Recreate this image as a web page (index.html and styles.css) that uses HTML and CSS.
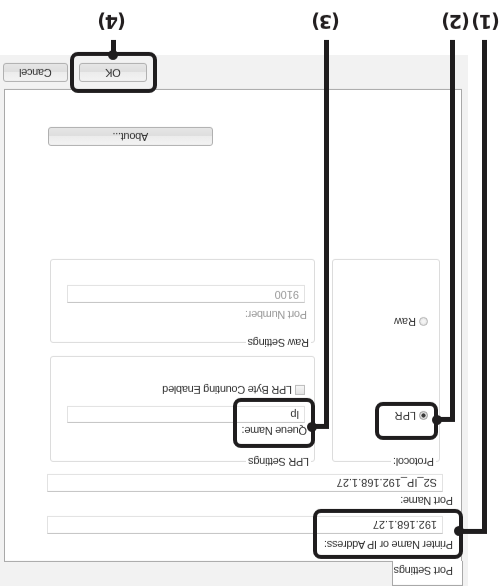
FILE: index.html
```html
<!DOCTYPE html>
<html lang="en">

<head>
    <meta charset="UTF-8">
    <title>Port Settings</title>
    <link rel="stylesheet" href="styles.css">
</head>

<body>
    <!-- the whole sheet is shown upside down -->
    <div class="page">
        <div class="dialog">
            <div class="tabs">
                <div class="tab">Port Settings</div>
            </div>
            <div class="panel">
                <div class="label">Printer Name or IP Address:</div>
                <div class="field">192.168.1.27</div>
                <div class="label">Port Name:</div>
                <div class="field">S2_IP_192.168.1.27</div>

                <div class="groups">
                    <fieldset class="group protocol">
                        <legend>Protocol:</legend>
                        <div class="radio lpr-radio"><span class="bullet checked"></span>LPR</div>
                        <div class="radio raw-radio"><span class="bullet"></span>Raw</div>
                    </fieldset>

                    <div class="settings">
                        <fieldset class="group lpr">
                            <legend>LPR Settings</legend>
                            <div class="sub-label">Queue Name:</div>
                            <div class="field small">lp</div>
                            <div class="check"><span class="box"></span>LPR Byte Counting Enabled</div>
                        </fieldset>
                        <fieldset class="group raw">
                            <legend>Raw Settings</legend>
                            <div class="sub-label disabled">Port Number:</div>
                            <div class="field small disabled">9100</div>
                        </fieldset>
                    </div>
                </div>

                <div class="about-row">
                    <div class="btn about">About...</div>
                </div>
            </div>
            <div class="buttons">
                <div class="btn ok">OK</div>
                <div class="btn cancel">Cancel</div>
            </div>
        </div>

        <!-- callouts -->
        <div class="callout c1"></div>
        <div class="callout c2"></div>
        <div class="callout c3"></div>
        <div class="callout c4"></div>

        <div class="wire v1"></div>
        <div class="wire h1"></div>
        <div class="wire v2"></div>
        <div class="wire h2"></div>
        <div class="wire v3"></div>
        <div class="wire h3"></div>
        <div class="wire v4"></div>

        <div class="pin p1"></div>
        <div class="pin p2"></div>
        <div class="pin p3"></div>
        <div class="pin p4"></div>

        <div class="num n1">(1)</div>
        <div class="num n2">(2)</div>
        <div class="num n3">(3)</div>
        <div class="num n4">(4)</div>
    </div>
</body>

</html>
```

FILE: styles.css
```css
* {
    box-sizing: border-box;
}

body {
    margin: 0;
    background-color: #fff;
    font-family: "Liberation Sans", Arial, sans-serif;
    font-size: 11px;
    color: #333;
}

.page {
    position: relative;
    width: 501px;
    height: 586px;
    overflow: hidden;
    transform: rotate(180deg);
}

/* dialog */
.dialog {
    margin-left: 33px;
    width: 468px;
    height: 531px;
    background-color: #f2f2f2;
}

.tabs {
    height: 24px;
    padding-left: 5px;
}

.tab {
    position: relative;
    z-index: 1;
    width: 71px;
    height: 25px;
    padding: 8px 0 0 9px;
    background-color: #fff;
    border: 1px solid #a9a9a9;
    border-bottom: none;
    line-height: 13px;
    letter-spacing: -0.3px;
}

.panel {
    margin-left: 6px;
    width: 458px;
    height: 473px;
    background-color: #fff;
    border: 1px solid #a9a9a9;
    padding-top: 10px;
}

.label {
    margin: 0 0 4px 8px;
    line-height: 13px;
    letter-spacing: -0.3px;
}

.field {
    margin: 0 0 9px 18px;
    width: 396px;
    height: 18px;
    padding: 2px 0 0 5px;
    line-height: 13px;
    border: 1px solid #e2e2e2;
    border-top-color: #c4c4c4;
}

.field + .label {
    margin-top: 0;
}

.label + .field + .label + .field {
    margin-bottom: 0;
}

.label:nth-child(3) {
    margin-bottom: 2px;
}

/* group boxes */
.groups {
    display: flex;
    gap: 17px;
    margin: 6px 0 0 21px;
}

.group {
    margin: 0;
    padding: 0;
    border: 1px solid #dcdcdc;
    border-radius: 3px;
}

.group legend {
    margin-left: 3px;
    padding: 0 2px;
    line-height: 13px;
    letter-spacing: -0.3px;
}

.protocol {
    width: 108px;
    height: 209px;
}

.radio {
    display: flex;
    align-items: center;
    gap: 3px;
    margin-left: 11px;
    line-height: 13px;
}

.lpr-radio {
    margin-top: 33px;
}

.raw-radio {
    margin-top: 81px;
}

.bullet {
    width: 9px;
    height: 9px;
    border: 1px solid #b4b4b4;
    border-radius: 50%;
    background: radial-gradient(circle, #f4f4f4 30%, #d8d8d8 100%);
}

.bullet.checked {
    background: radial-gradient(circle, #3a3a3a 0 1.8px, #e6e6e6 2.4px, #cfcfcf 100%);
    border-color: #9a9a9a;
}

.settings {
    width: 265px;
}

.lpr {
    height: 112px;
}

.raw {
    margin-top: 7px;
    height: 90px;
}

.sub-label {
    margin: 0 0 0 7px;
    line-height: 13px;
    letter-spacing: -0.3px;
}

.lpr .sub-label {
    margin-top: 18px;
}

.raw .sub-label {
    margin-top: 15px;
}

.field.small {
    margin: 1px 0 0 9px;
    width: 238px;
    height: 17px;
    padding-top: 1px;
}

.raw .field.small {
    margin-top: 5px;
    height: 18px;
}

.disabled {
    color: #9a9a9a;
}

.check {
    display: flex;
    align-items: center;
    gap: 3px;
    margin: 10px 0 0 9px;
    line-height: 12px;
    letter-spacing: -0.3px;
}

.box {
    width: 10px;
    height: 10px;
    border: 1px solid #bdbdbd;
    background: linear-gradient(#e4e4e4, #f7f7f7);
}

.about-row {
    display: flex;
    justify-content: flex-end;
    margin: 113px 43px 0 0;
}

/* buttons */
.btn {
    height: 19px;
    line-height: 17px;
    text-align: center;
    border: 1px solid #b0b0b0;
    border-radius: 3px;
    background: linear-gradient(#f3f3f3 0%, #ececec 50%, #dedede 51%, #e6e6e6 100%);
    letter-spacing: -0.3px;
}

.about {
    width: 165px;
}

.buttons {
    display: flex;
    gap: 11px;
    padding: 7px 0 0 321px;
}

.ok {
    width: 68px;
}

.cancel {
    width: 65px;
}

/* callouts */
.callout {
    position: absolute;
    border: 4px solid #1f1d1e;
    border-radius: 8px;
}

.c1 { left: 38px; top: 27px; width: 150px; height: 50px; }
.c2 { left: 63px; top: 146px; width: 63px; height: 38px; }
.c3 { left: 186px; top: 138px; width: 82px; height: 50px; }
.c4 { left: 344px; top: 493px; width: 87px; height: 41px; }

.wire {
    position: absolute;
    background-color: #1f1d1e;
}

.v1 { left: 14px; top: 52px; width: 5px; height: 494px; }
.h1 { left: 14px; top: 52px; width: 28px; height: 5px; }
.v2 { left: 46px; top: 164px; width: 5px; height: 382px; }
.h2 { left: 46px; top: 164px; width: 18px; height: 5px; }
.v3 { left: 172px; top: 157px; width: 5px; height: 389px; }
.h3 { left: 172px; top: 157px; width: 17px; height: 5px; }
.v4 { left: 385px; top: 531px; width: 5px; height: 15px; }

.pin {
    position: absolute;
    width: 10px;
    height: 10px;
    border-radius: 50%;
    background-color: #1f1d1e;
}

.p1 { left: 37px; top: 50px; }
.p2 { left: 59px; top: 161px; }
.p3 { left: 184px; top: 154px; }
.p4 { left: 383px; top: 526px; }

.num {
    position: absolute;
    top: 554px;
    width: 30px;
    font-family: "DejaVu Sans", sans-serif;
    font-weight: bold;
    font-size: 19px;
    line-height: 20px;
    letter-spacing: -1px;
    text-align: center;
    color: #231f20;
}

.n1 { left: 0; }
.n2 { left: 30px; }
.n3 { left: 160px; }
.n4 { left: 374px; }
```
